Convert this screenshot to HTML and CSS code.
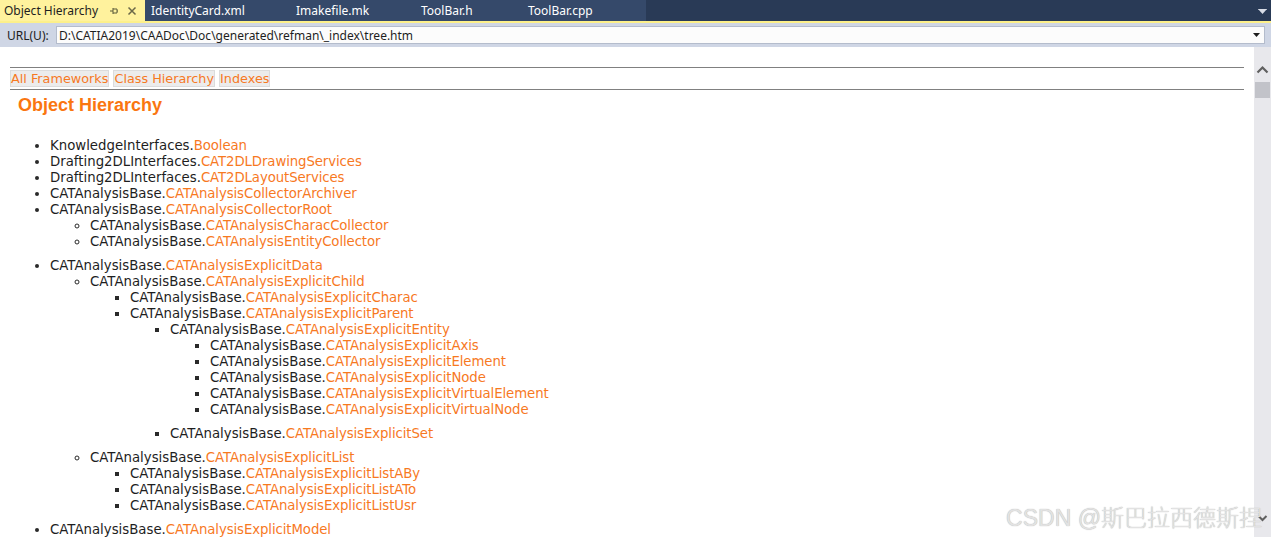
FILE: index.html
```html
<!DOCTYPE html>
<html>
<head>
<meta charset="utf-8">
<link rel="stylesheet" href="styles.css">
</head>
<body>
<div class="app">
  <div class="tabbar">
    <div class="tabs">
      <div class="tab active">
        <span class="tab-title">Object Hierarchy</span>
        <svg class="pin" width="10" height="10" viewBox="0 0 10 10"><path d="M1 5H4M4 2V8M4 3H8V7H4M8 5H9" fill="none" stroke="#5a5a3a" stroke-width="1"/></svg>
        <svg class="close" width="10" height="10" viewBox="0 0 10 10"><path d="M1.5 1.5L8.5 8.5M8.5 1.5L1.5 8.5" fill="none" stroke="#6b6848" stroke-width="1.5"/></svg>
      </div>
      <div class="tab t1">IdentityCard.xml</div>
      <div class="tab t2">Imakefile.mk</div>
      <div class="tab t3">ToolBar.h</div>
      <div class="tab t4">ToolBar.cpp</div>
    </div>
    <div class="tab-rest">
      <svg class="tab-menu" width="9" height="6" viewBox="0 0 9 6"><path d="M0 0H9L4.5 5Z" fill="#d8dce6"/><path d="M0 0H9" stroke="#d8dce6"/></svg>
    </div>
  </div>
  <div class="urlbar">
    <span class="url-label">URL(U):</span>
    <div class="url-box">
      <span class="url-text">D:\CATIA2019\CAADoc\Doc\generated\refman\_index\tree.htm</span>
      <svg class="url-drop" width="7" height="4" viewBox="0 0 7 4"><path d="M0 0H7L3.5 4Z" fill="#1e1e1e"/></svg>
    </div>
  </div>
  <div class="view">
    <div class="doc">
      <hr class="rule">
      <div class="navlinks">
        <a class="navlink">All Frameworks</a>
        <a class="navlink">Class Hierarchy</a>
        <a class="navlink">Indexes</a>
      </div>
      <hr class="rule">
      <h1 class="title">Object Hierarchy</h1>
      <ul class="tree l1">
        <li>KnowledgeInterfaces.<a>Boolean</a></li>
        <li>Drafting2DLInterfaces.<a>CAT2DLDrawingServices</a></li>
        <li>Drafting2DLInterfaces.<a>CAT2DLayoutServices</a></li>
        <li>CATAnalysisBase.<a>CATAnalysisCollectorArchiver</a></li>
        <li>CATAnalysisBase.<a>CATAnalysisCollectorRoot</a>
          <ul class="tree l2">
            <li>CATAnalysisBase.<a>CATAnalysisCharacCollector</a></li>
            <li>CATAnalysisBase.<a>CATAnalysisEntityCollector</a></li>
          </ul>
        </li>
        <li>CATAnalysisBase.<a>CATAnalysisExplicitData</a>
          <ul class="tree l2">
            <li>CATAnalysisBase.<a>CATAnalysisExplicitChild</a>
              <ul class="tree l3">
                <li>CATAnalysisBase.<a>CATAnalysisExplicitCharac</a></li>
                <li>CATAnalysisBase.<a>CATAnalysisExplicitParent</a>
                  <ul class="tree l3">
                    <li>CATAnalysisBase.<a>CATAnalysisExplicitEntity</a>
                      <ul class="tree l3">
                        <li>CATAnalysisBase.<a>CATAnalysisExplicitAxis</a></li>
                        <li>CATAnalysisBase.<a>CATAnalysisExplicitElement</a></li>
                        <li>CATAnalysisBase.<a>CATAnalysisExplicitNode</a></li>
                        <li>CATAnalysisBase.<a>CATAnalysisExplicitVirtualElement</a></li>
                        <li>CATAnalysisBase.<a>CATAnalysisExplicitVirtualNode</a></li>
                      </ul>
                    </li>
                    <li>CATAnalysisBase.<a>CATAnalysisExplicitSet</a></li>
                  </ul>
                </li>
              </ul>
            </li>
            <li>CATAnalysisBase.<a>CATAnalysisExplicitList</a>
              <ul class="tree l3">
                <li>CATAnalysisBase.<a>CATAnalysisExplicitListABy</a></li>
                <li>CATAnalysisBase.<a>CATAnalysisExplicitListATo</a></li>
                <li>CATAnalysisBase.<a>CATAnalysisExplicitListUsr</a></li>
              </ul>
            </li>
          </ul>
        </li>
        <li>CATAnalysisBase.<a>CATAnalysisExplicitModel</a></li>
      </ul>
    </div>
    <div class="scrollbar">
      <svg class="sb-up" width="13" height="9" viewBox="0 0 13 9"><path d="M1.5 7.5L6.5 2.5L11.5 7.5" fill="none" stroke="#606060" stroke-width="2.2"/></svg>
      <div class="sb-thumb"></div>
      <div class="sb-track"></div>
      <svg class="sb-down" width="11" height="8" viewBox="0 0 11 8"><path d="M1.5 2L5.5 6L9.5 2" fill="none" stroke="#606060" stroke-width="2"/></svg>
    </div>
    <div class="watermark">CSDN @斯巴拉西德斯捏</div>
  </div>
</div>
</body>
</html>
```

FILE: styles.css
```css
html, body {
  margin: 0;
  padding: 0;
  height: 100%;
  overflow: hidden;
}
body {
  font-family: "Noto Sans", "DejaVu Sans", sans-serif;
  background: #ffffff;
}
.app {
  display: flex;
  flex-direction: column;
  height: 100vh;
}
.tabbar {
  display: flex;
  height: 21px;
  background: #293a56;
  border-bottom: 2px solid #fdf08a;
  flex: none;
}
.tabs {
  display: flex;
  width: 646px;
  background: #35496a;
}
.tab {
  display: flex;
  align-items: center;
  font-size: 12px;
  color: #ffffff;
  white-space: nowrap;
  height: 21px;
  font-family: "Noto Sans", sans-serif;
}
.tab.active {
  width: 145px;
  background: #fff29d;
  color: #1e1e1e;
  padding-left: 4px;
  box-sizing: border-box;
}
.tab-title { margin-right: 11px; }
.pin { margin-right: 8px; }
.t1 { padding-left: 6px; width: 139px; }
.t2 { padding-left: 6px; width: 119px; }
.t3 { padding-left: 6px; width: 101px; }
.t4 { padding-left: 6px; }
.tab-rest {
  flex: 1;
  display: flex;
  justify-content: flex-end;
  align-items: center;
  padding-right: 4px;
}
.tab-menu { margin-top: 2px; }
.urlbar {
  flex: none;
  height: 24px;
  background: #cfd6e5;
  display: flex;
  align-items: center;
  padding-left: 7px;
  padding-right: 6px;
  font-size: 12px;
  color: #1e1e1e;
}
.url-label {
  width: 49px;
  flex: none;
}
.url-box {
  flex: 1;
  height: 18px;
  background: #fcfcfc;
  border: 1px solid #b4bccc;
  box-sizing: border-box;
  display: flex;
  align-items: center;
  padding-left: 2px;
  padding-right: 4px;
}
.url-text { flex: 1; }
.view {
  flex: 1;
  display: flex;
  min-height: 0;
  position: relative;
}
.doc {
  flex: 1;
  overflow: hidden;
  padding: 20px 10px 0 10px;
  font-family: "DejaVu Sans", Verdana, sans-serif;
  font-size: 13.3px;
  color: #1e1e1e;
}
.rule {
  margin: 0;
  border: none;
  border-top: 1px solid #808080;
  height: 0;
}
.navlinks {
  display: flex;
  gap: 4px;
  padding: 2px 0 2px 0;
  font-size: 12.8px;
}
.navlink {
  color: #f7791f;
  background: #ececec;
  border: 1px solid #dcdcdc;
  line-height: 15px;
  padding: 0;
}
.title {
  font-family: "Liberation Sans", Arial, sans-serif;
  font-size: 18px;
  font-weight: bold;
  color: #fa7610;
  margin: 4px 0 0 8px;
  line-height: 22px;
}
.tree {
  margin: 0;
  padding-left: 40px;
  line-height: 16px;
}
.tree a { color: #f7791f; letter-spacing: -0.1px; }
.l1 {
  margin-top: 22px;
  list-style-type: disc;
}
.l2 { list-style-type: circle; margin-bottom: 8px; }
.l3 { list-style-type: square; margin-bottom: 8px; }
.tree li::marker { color: #2a2a2a; }
.watermark {
  position: absolute;
  right: 9px;
  bottom: 6px;
  font-family: "Liberation Sans", "Noto Sans CJK SC", sans-serif;
  font-size: 23px;
  font-weight: 300;
  line-height: 26px;
  color: #e2e2e2;
  text-shadow: 0 0 1px #a6a6a6;
  white-space: nowrap;
  pointer-events: none;
}
.scrollbar {
  width: 17px;
  flex: none;
  background: #e8e8ec;
  display: flex;
  flex-direction: column;
  align-items: center;
}
.sb-up { margin-top: 18px; }
.sb-thumb {
  width: 15px;
  height: 16px;
  background: #c2c3c9;
  margin-top: 8px;
}
.sb-track { flex: 1; }
.sb-down { margin-bottom: 15px; }
```
